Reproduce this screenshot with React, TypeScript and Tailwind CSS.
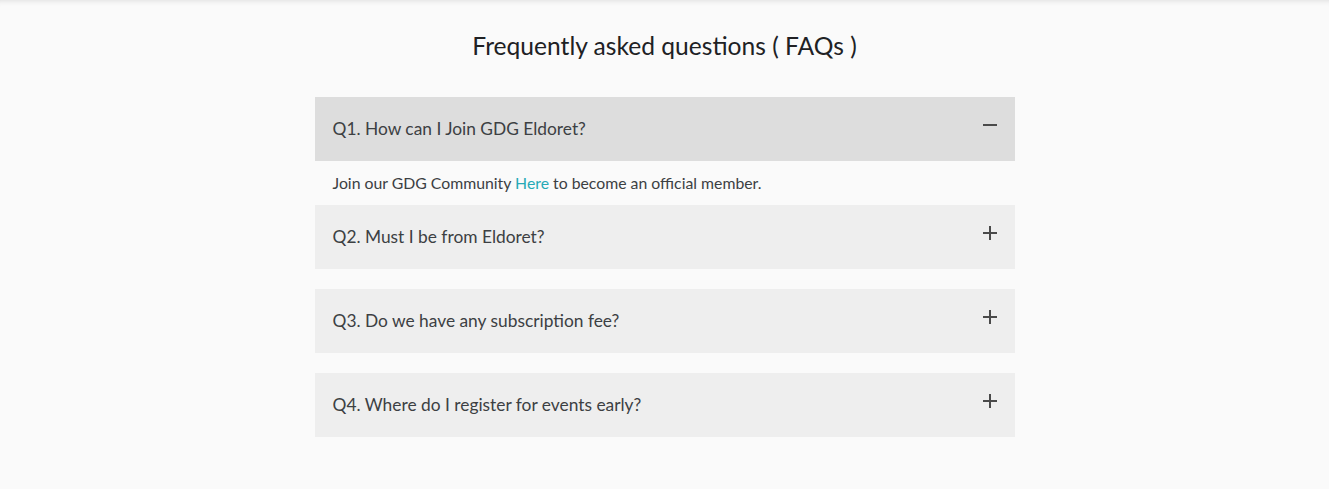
import React, { useState } from 'react'

const faqs = [
  { q: 'Q1. How can I Join GDG Eldoret?', a: true },
  { q: 'Q2. Must I be from Eldoret?' },
  { q: 'Q3. Do we have any subscription fee?' },
  { q: 'Q4. Where do I register for events early?' },
]

const App = () => {
  const [open, setOpen] = useState(0)
  return (
    <div className='w-full min-h-[489px] bg-[#fafafa] font-["Lato","Liberation_Sans",sans-serif] shadow-[inset_0_6px_6px_-6px_rgba(0,0,0,0.15)]'>
      <h2 className='pt-[30px] text-center text-[24.6px] leading-[32px] text-[#202124]'>Frequently asked questions ( FAQs )</h2>
      <div className='w-[700px] mx-auto mt-[35px] flex flex-col'>
        {faqs.map((f, i) => (
          <div key={i} className={i === open ? '' : 'mb-[20px]'}>
            <button
              onClick={() => setOpen(open === i ? -1 : i)}
              className={`w-full h-[64px] flex items-center justify-between pl-[18px] pr-[18px] text-left ${i === open ? 'bg-[#dddddd]' : 'bg-[#eeeeee]'}`}
            >
              <span className='text-[17.35px] text-[#3c4043]'>{f.q}</span>
              <span className='relative w-[14px] h-[14px] -mt-[8px]'>
                <span className='absolute left-0 right-0 top-[6px] h-[2px] bg-[#4a4a4a]'></span>
                {i !== open && <span className='absolute top-0 bottom-0 left-[6px] w-[2px] bg-[#4a4a4a]'></span>}
              </span>
            </button>
            {i === open && (
              <p className='h-[44px] pl-[18px] flex items-center text-[15.8px] text-[#3c4043]'>
                Join our GDG Community&nbsp;<a className='text-[#26a9b6] cursor-pointer'>Here</a>&nbsp;to become an official member.
              </p>
            )}
          </div>
        ))}
      </div>
    </div>
  )
}

export default App
